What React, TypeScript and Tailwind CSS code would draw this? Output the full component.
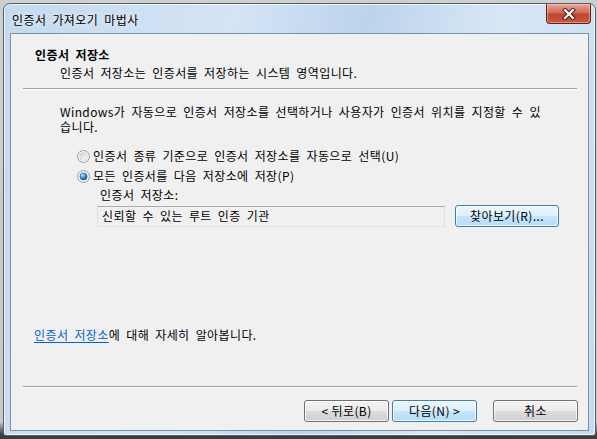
import React from 'react';

function Radio({ checked }: { checked?: boolean }) {
    return (
        <svg width="13" height="13" viewBox="0 0 13 13" className="shrink-0">
            <defs>
                <linearGradient id="radio-bg" x1="0" y1="0" x2="1" y2="1">
                    <stop offset="0" stopColor="#d2d2d2" />
                    <stop offset="1" stopColor="#fbfbfb" />
                </linearGradient>
                <radialGradient id="radio-dot" cx="0.35" cy="0.3" r="0.8">
                    <stop offset="0" stopColor="#b8ecff" />
                    <stop offset="0.45" stopColor="#3d9be0" />
                    <stop offset="1" stopColor="#0d3f77" />
                </radialGradient>
            </defs>
            <circle cx="6.5" cy="6.5" r="6" fill="#f6f6f6" stroke="#9a9a9a" />
            {checked ? (
                <circle cx="6.5" cy="6.5" r="3.6" fill="url(#radio-dot)" stroke="#1f4f80" strokeWidth="0.6" />
            ) : (
                <circle cx="6.5" cy="6.5" r="4" fill="url(#radio-bg)" stroke="#cfcfcf" strokeWidth="0.6" />
            )}
        </svg>
    );
}

function Button({ children, primary, className }: { children: React.ReactNode; primary?: boolean; className?: string }) {
    return (
        <button
            className={
                'h-[22px] rounded-[3px] border text-[12px] leading-[14px] text-black shadow-[inset_0_0_0_1px_rgba(255,255,255,0.8)] ' +
                (primary
                    ? 'border-[#3c7fb1] bg-[linear-gradient(#ecf6fd_0%,#dcf0fc_50%,#c6e6fb_50%,#b6dcf5_100%)] '
                    : 'border-[#707070] bg-[linear-gradient(#f2f2f2_0%,#ebebeb_50%,#dddddd_50%,#cfcfcf_100%)] ') +
                (className ?? '')
            }
        >
            {children}
        </button>
    );
}

function Etched() {
    return <div className="ml-[12px] mr-[11px] h-[2px] border-t border-t-[#a0a0a0] border-b border-b-white" />;
}

export default function App() {
    return (
        <div className="w-[597px] h-[439px] overflow-hidden bg-[linear-gradient(#cfcfcf_0%,#c9c9c9_96%,#3d3d3d_99%)] font-['Noto_Sans_CJK_KR',sans-serif] text-[12px] leading-[14px] text-black tracking-[0.4px] [word-spacing:3px]">
            {/* Window frame */}
            <div className="ml-[3px] mt-[3px] w-[593px] h-[433px] flex flex-col rounded-t-[7px] rounded-b-[3px] border border-[#4f5e70] bg-[linear-gradient(100deg,#c4d9ef_0%,#d4e4f5_35%,#bcd3ec_55%,#d8e7f6_75%,#c6dbef_100%)] shadow-[inset_0_0_0_1px_rgba(255,255,255,0.7)]">
                {/* Title bar */}
                <div className="relative h-[29px] pl-[8px] pt-[9px] [text-shadow:0_0_6px_#fff]">
                    인증서 가져오기 마법사
                    <div className="absolute right-[4px] top-0 w-[45px] h-[20px] flex items-center justify-center rounded-b-[4px] border border-t-0 border-[#5a2318] bg-[linear-gradient(#e9a99b_0%,#d2685a_45%,#c0442f_55%,#cb5a3f_100%)] shadow-[inset_0_0_0_1px_rgba(255,220,210,0.45)]">
                        <svg width="14" height="12" viewBox="0 0 14 12">
                            <path d="M3 2 L11 10 M11 2 L3 10" stroke="#3a1710" strokeWidth="4" strokeLinecap="square" />
                            <path d="M3 2 L11 10 M11 2 L3 10" stroke="#ffffff" strokeWidth="2.2" strokeLinecap="square" />
                        </svg>
                    </div>
                </div>

                {/* Client area */}
                <div className="mx-[6px] h-[398px] flex flex-col border border-[#7f90a4] bg-[#f0f0f0]">
                    {/* Header */}
                    <div className="pt-[14px] pl-[24px]">
                        <p className="font-bold">인증서 저장소</p>
                        <p className="mt-[4px] pl-[25px]">인증서 저장소는 인증서를 저장하는 시스템 영역입니다.</p>
                    </div>
                    <div className="mt-[8px]">
                        <Etched />
                    </div>

                    {/* Body */}
                    <div className="mt-[15px] pl-[49px]">
                        <p>Windows가 자동으로 인증서 저장소를 선택하거나 사용자가 인증서 위치를 지정할 수 있</p>
                        <p className="mt-[1px]">습니다.</p>
                    </div>

                    <div className="mt-[15px] pl-[66px] flex items-center gap-[3px]">
                        <Radio />
                        <span>인증서 종류 기준으로 인증서 저장소를 자동으로 선택(U)</span>
                    </div>
                    <div className="mt-[6px] pl-[66px] flex items-center gap-[3px]">
                        <Radio checked />
                        <span>모든 인증서를 다음 저장소에 저장(P)</span>
                    </div>
                    <p className="mt-[5px] pl-[89px]">인증서 저장소:</p>
                    <div className="mt-[3px] pl-[86px] flex items-center gap-[10px]">
                        <div className="w-[348px] h-[21px] pl-[4px] flex items-center border border-[#dfe3e8] border-t-[#abadb3] bg-[#f0f0f0]">
                            신뢰할 수 있는 루트 인증 기관
                        </div>
                        <Button primary className="w-[104px] h-[21px]">찾아보기(R)...</Button>
                    </div>

                    <p className="mt-[101px] pl-[23px]">
                        <span className="text-[#0066cc] underline underline-offset-2">인증서 저장소</span>에 대해 자세히 알아봅니다.
                    </p>

                    <div className="mt-[44px]">
                        <Etched />
                    </div>

                    {/* Footer buttons */}
                    <div className="mt-[12px] pr-[10px] flex justify-end">
                        <Button className="w-[85px]">&lt; 뒤로(B)</Button>
                        <Button primary className="ml-[3px] w-[85px]">다음(N) &gt;</Button>
                        <Button className="ml-[16px] w-[85px]">취소</Button>
                    </div>
                </div>
            </div>
        </div>
    );
}
